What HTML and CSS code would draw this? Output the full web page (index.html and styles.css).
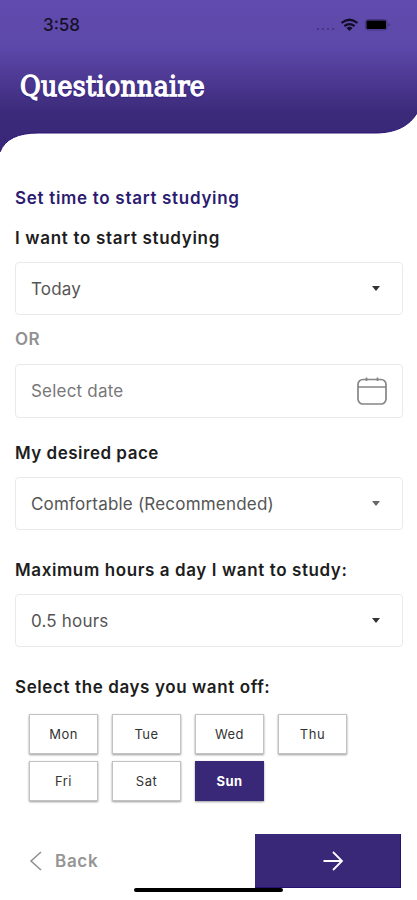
FILE: index.html
```html
<!DOCTYPE html>
<html lang="en">
<head>
<meta charset="utf-8">
<title>Questionnaire</title>
<link rel="stylesheet" href="styles.css">
</head>
<body>
<main class="screen">
  <header class="header">
    <svg class="header-bg" viewBox="0 0 417 154" aria-hidden="true">
      <defs><linearGradient id="g" x1="0" y1="0" x2="0" y2="1">
        <stop offset="0" stop-color="#614bae"/><stop offset=".3" stop-color="#5d49aa"/>
        <stop offset=".55" stop-color="#4b378f"/><stop offset=".75" stop-color="#3b2a79"/><stop offset="1" stop-color="#392677"/>
      </linearGradient></defs>
      <path d="M0 0H417V113C410 125 397 133 375 133H38C18 133 5 139 0 152Z" fill="url(#g)"/>
      <path d="M417 113C410 125 397 133 375 133H38C18 133 5 139 0 152" fill="none" stroke="#2b1475" stroke-width="1"/>
    </svg>
    <div class="status">
      <span class="time">3:58</span>
      <svg class="status-icons" width="78" height="18" viewBox="0 0 78 18" aria-hidden="true">
        <g fill="#3f317a"><circle cx="5" cy="14" r="1"/><circle cx="10" cy="14" r="1"/><circle cx="15" cy="14" r="1"/><circle cx="20" cy="14" r="1"/></g>
        <g fill="none" stroke="#120d25" stroke-width="2.200"><path d="M28.500 8Q36.500 1.500 44.500 8"/><path d="M31.300 11.200Q36.500 7 41.700 11.200"/></g>
        <path d="M33.500 13Q36.500 10.700 39.500 13L36.500 16Z" fill="#120d25"/>
        <rect x="52.500" y="4.500" width="21.500" height="10.500" rx="2.500" fill="none" stroke="#44357f"/>
        <rect x="53.500" y="5.500" width="19.500" height="8.500" rx="1" fill="#000"/>
        <path d="M75.500 8Q78.500 9.700 75.500 11.500Z" fill="#44357f"/>
      </svg>
    </div>
    <h1 class="title">Questionnaire</h1>
  </header>
  <form class="form">
    <h2 class="label section">Set time to start studying</h2>
    <h3 class="label start">I want to start studying</h3>
    <div class="field"><span class="v-today">Today</span><i class="caret"></i></div>
    <p class="label or">OR</p>
    <div class="field date"><span class="v-date">Select date</span>
      <svg width="32" height="30" viewBox="0 0 32 30" fill="none" stroke="#858585" stroke-width="1.700" aria-hidden="true"><rect x="2" y="3.500" width="28" height="24.500" rx="5"/><path d="M2 11H30M10.500 1.500V5M21.500 1.500V5"/></svg>
    </div>
    <h3 class="label pace">My desired pace</h3>
    <div class="field"><span class="v-pace">Comfortable (Recommended)</span><i class="caret soft"></i></div>
    <h3 class="label hours">Maximum hours a day I want to study:</h3>
    <div class="field"><span class="v-hours">0.5 hours</span><i class="caret"></i></div>
    <h3 class="label off">Select the days you want off:</h3>
    <div class="days">
      <span class="day">Mon</span><span class="day">Tue</span><span class="day">Wed</span><span class="day">Thu</span>
      <span class="day">Fri</span><span class="day">Sat</span><span class="day selected">Sun</span>
    </div>
  </form>
  <footer class="footer">
    <div class="back">
      <svg width="14" height="20" viewBox="0 0 14 20" fill="none" stroke="#8e8e8e" stroke-width="1.500" aria-hidden="true"><path d="M12 1L2 10L12 19"/></svg>
      <span>Back</span>
    </div>
    <div class="next">
      <svg width="22" height="22" viewBox="0 0 22 22" fill="none" stroke="#fff" stroke-width="1.800" aria-hidden="true"><path d="M1.500 11H20M11 2L20 11L11 20"/></svg>
    </div>
  </footer>
  <div class="home-bar"></div>
</main>
</body>
</html>
```
FILE: styles.css
```css
* { box-sizing: border-box; }
body { margin: 0; background: #fff; font-family: Inter, "Liberation Sans", sans-serif; }
.screen { position: relative; width: 417px; height: 900px; overflow: hidden; display: flex; flex-direction: column; }
.header { position: relative; height: 154px; flex: none; }
.header-bg { position: absolute; left: 0; top: 0; width: 417px; height: 154px; }
.status { position: relative; display: flex; justify-content: space-between; align-items: center; height: 50px; padding: 0 26px 0 43px; }
.time { font-size: 17px; font-weight: 500; letter-spacing: 0; color: #151026; }
.status-icons { display: block; margin-top: -3px; }
.title { position: relative; margin: 18px 0 0 20px; font: normal 28px/38px "DejaVu Serif Condensed", "DejaVu Serif", serif; font-stretch: condensed; letter-spacing: 0.35px; color: #fff; -webkit-text-stroke: 1.3px #fff; text-shadow: 0 1px 2px #200b78; }
.form { padding: 0 15px; flex: none; }
.label { margin: 0; font-size: 17px; line-height: 24px; font-weight: 600; letter-spacing: 0.6px; color: #1d1d1d; white-space: nowrap; }
.section { margin-top: 32px; color: #2c1c70; letter-spacing: 0.7px; }
.start { margin: 16px 0 12px; letter-spacing: 0.68px; }
.or { margin: 12px 0 13px; color: #919191; letter-spacing: 0.5px; }
.pace { margin: 23px 0 12px; letter-spacing: 0.5px; }
.hours { margin: 28px 0 12px; }
.off { margin: 28px 0 15px; }
.field { display: flex; align-items: center; justify-content: space-between; width: 388px; height: 53px; padding: 0 22px 0 15px; border: 1px solid #e8eaea; border-radius: 4px; color: #555; font-size: 17px; letter-spacing: 0.2px; }
.date { height: 54px; padding-right: 14px; color: #777; }
.caret { width: 0; height: 0; border: 4px solid transparent; border-top: 5px solid #333; border-bottom: 0; }
.soft { border-top-color: #666; }
.days { display: grid; grid-template-columns: repeat(4, 69px); grid-auto-rows: 40px; gap: 7px 14px; margin-left: 14px; }
.day { display: flex; align-items: center; justify-content: center; border: 1px solid #c2c2c2; box-shadow: 0 1px 2px #999; font-size: 13px; letter-spacing: 0.5px; color: #333; background: #fff; }
.selected { background: #392778; border-color: #392778; color: #fff; font-weight: 700; }
.footer { display: flex; justify-content: space-between; align-items: center; height: 54px; margin: 33px 16px 0 29px; flex: none; }
.back { display: flex; align-items: center; gap: 12px; color: #959595; font-size: 17px; font-weight: 600; letter-spacing: 0.7px; }
.next { display: flex; align-items: center; justify-content: center; width: 146px; height: 54px; padding-left: 10px; background: #392778; border: solid #281070; border-width: 0 1px 1px 0; }
.home-bar { position: absolute; left: 134px; top: 888px; width: 149px; height: 4px; border-radius: 2px; background: #000; }
```
